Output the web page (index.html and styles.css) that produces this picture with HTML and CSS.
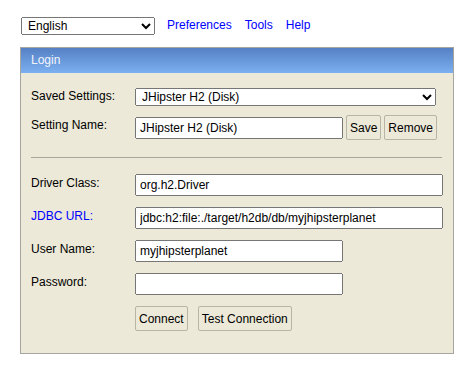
FILE: index.html
```
<!DOCTYPE html>
<html lang="en">
<head>
    <meta charset="UTF-8">
    <meta name="viewport" content="width=device-width, initial-scale=1.0">
    <title>H2 Console</title>
    <link rel="stylesheet" href="styles.css">
</head>
<body>

<!-- top bar: language + links -->
<div class="topbar">
    <select class="lang-select">
        <option>English</option>
        <option>Deutsch</option>
        <option>Français</option>
    </select>
    <a href="#">Preferences</a>
    <a href="#">Tools</a>
    <a href="#">Help</a>
</div>

<div class="login">
    <div class="login-head">Login</div>
    <div class="login-body">
        <div class="row row-saved">
            <label>Saved Settings:</label>
            <select class="setting-select">
                <option>JHipster H2 (Disk)</option>
                <option>Generic H2 (Embedded)</option>
            </select>
        </div>
        <div class="row row-name">
            <label>Setting Name:</label>
            <div class="inline">
                <input type="text" class="short" value="JHipster H2 (Disk)">
                <button>Save</button>
                <button>Remove</button>
            </div>
        </div>

        <hr>

        <div class="row row-first">
            <label>Driver Class:</label>
            <input type="text" class="long" value="org.h2.Driver">
        </div>
        <div class="row">
            <label class="link-label">JDBC URL:</label>
            <input type="text" class="long" value="jdbc:h2:file:./target/h2db/db/myjhipsterplanet">
        </div>
        <div class="row">
            <label>User Name:</label>
            <input type="text" class="short" value="myjhipsterplanet">
        </div>
        <div class="row">
            <label>Password:</label>
            <input type="password" class="short">
        </div>
        <div class="row">
            <label></label>
            <div class="inline actions">
                <button>Connect</button>
                <button>Test Connection</button>
            </div>
        </div>
    </div>
</div>

</body>
</html>
```

FILE: styles.css
```
body {
    margin: 0;
    padding: 17px 20px;
    font: 12px/1.3 "Liberation Sans", Arial, sans-serif;
    color: black;
    background-color: white;
}
input, select, button {
    font: 12px "Liberation Sans", Arial, sans-serif;
    color: black;
    box-sizing: border-box;
}
a {
    color: #0000ff;
    text-decoration: none;
}

.topbar {
    display: flex;
    align-items: center;
    height: 18px;
    margin-bottom: 12px;
}
.lang-select {
    width: 134px;
    height: 18px;
    margin: 0 12px 0 1px;
    padding: 0 0 0 2px;
}
.topbar a {
    margin-right: 13px;
}

/* login box */
.login {
    width: 434px;
    box-sizing: border-box;
    border: 1px solid #a6a59f;
    background-color: #ece9d8;
}
.login-head {
    height: 25px;
    line-height: 25px;
    padding-left: 10px;
    color: #f2f4fb;
    background: linear-gradient(#5681c4, #7bb0f0);
}
.login-body {
    padding: 15px 10px 22px 10px;
}

.row {
    display: flex;
    align-items: flex-start;
    margin-top: 11px;
}
.row label {
    width: 104px;
    flex-shrink: 0;
    line-height: 18px;
}
.row-saved {
    margin-top: 0;
}
.row-saved label {
    margin-top: -1px;
}
.row-name {
    margin-top: 10px;
}
.row-first {
    margin-top: 16px;
}
.link-label {
    color: #0000ff;
}

.setting-select {
    width: 301px;
    height: 18px;
    padding: 0 0 0 2px;
}
.inline {
    display: flex;
    align-items: center;
    gap: 3px;
}
.actions {
    gap: 10px;
}
.row-name .inline {
    margin-top: -1px;
}

input[type=text], input[type=password] {
    height: 22px;
    padding: 1px 3px;
}
.short {
    width: 208px;
}
.long {
    width: 308px;
}

button {
    height: 25px;
    padding: 0 3px;
    background-color: #ece9d8;
    border: 1px solid #b8b4a6;
    border-radius: 2px;
}

hr {
    margin: 17px 1px 0 0;
    border: none;
    border-top: 1px solid #a8a69c;
}
```
